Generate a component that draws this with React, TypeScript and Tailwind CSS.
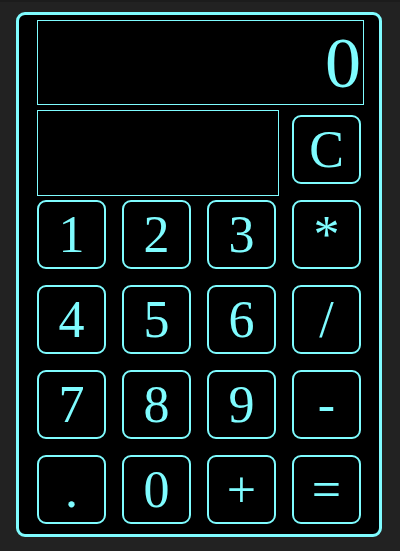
const keys = ['1', '2', '3', '*', '4', '5', '6', '/', '7', '8', '9', '-', '.', '0', '+', '='];

function Key({ label }: { label: string }) {
  return (
    <button className="w-[69px] h-[69px] rounded-[9px] border-2 border-[#7ffcff] bg-black text-[#7ffcff] text-[52px] leading-none flex items-center justify-center">
      {label}
    </button>
  );
}

export default function App() {
  return (
    <div className="w-[400px] h-[551px] bg-[#222222] border-t-2 border-[#1c1c1c] pt-[10px] pl-[16px]" style={{ fontFamily: '"Liberation Serif", "Times New Roman", serif' }}>
      <div className="w-[366px] h-[525px] rounded-[9px] border-[3px] border-[#7ffcff] bg-black pl-[18px] pt-[5px]">
        <div className="w-[327px] h-[85px] border border-[#7ffcff] flex items-center justify-end pr-[2px] text-[72px] leading-none text-[#7ffcff]">
          0
        </div>
        <div className="flex mt-[5px]">
          <div className="w-[242px] h-[86px] border border-[#7ffcff]" />
          <div className="ml-[13px] mt-[5px]">
            <Key label="C" />
          </div>
        </div>
        <div className="grid grid-cols-[repeat(4,69px)] gap-[16px] mt-[4px]">
          {keys.map((k) => (
            <Key key={k} label={k} />
          ))}
        </div>
      </div>
    </div>
  );
}
